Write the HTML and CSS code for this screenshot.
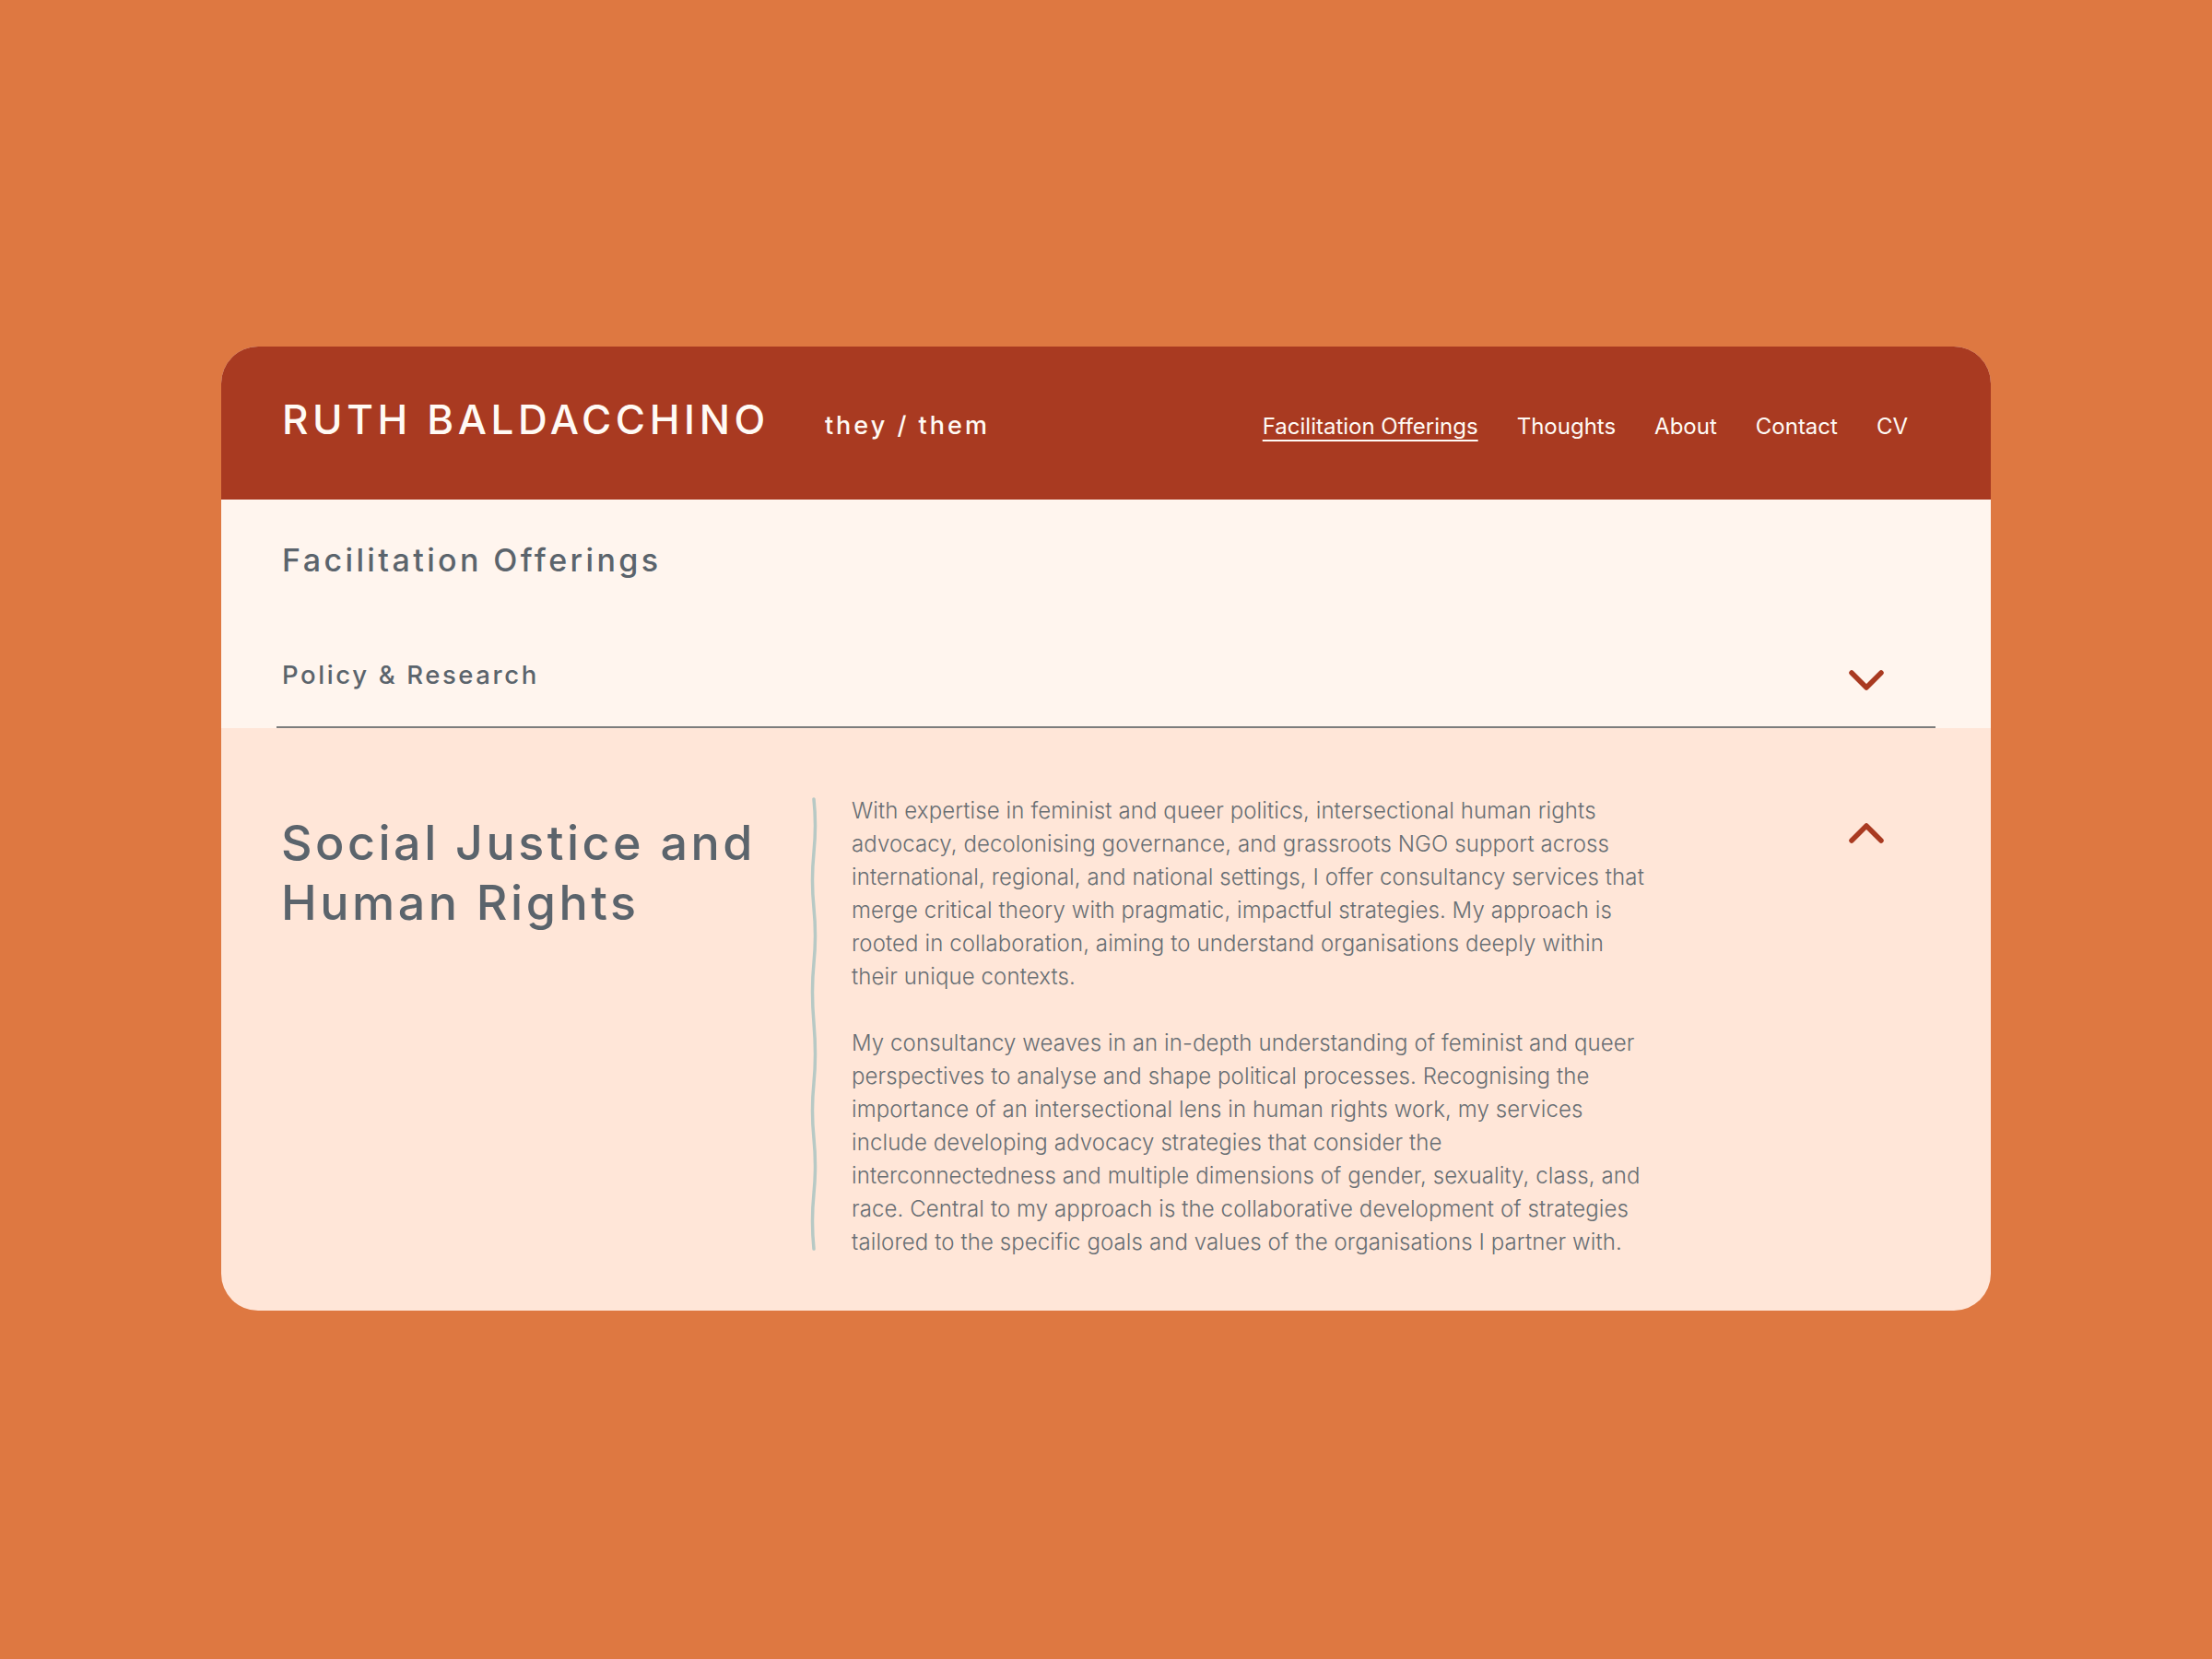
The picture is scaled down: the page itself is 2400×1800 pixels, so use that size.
FILE: index.html
```html
<!DOCTYPE html>
<html lang="en">
<head>
<meta charset="utf-8">
<title>Ruth Baldacchino — Facilitation Offerings</title>
<link rel="stylesheet" href="styles.css">
</head>
<body>
<div class="card">
  <header class="header">
    <div class="brand">RUTH BALDACCHINO</div>
    <div class="pronouns">they / them</div>
    <nav class="nav">
      <a class="nav-link active" href="#">Facilitation Offerings</a>
      <a class="nav-link" href="#">Thoughts</a>
      <a class="nav-link" href="#">About</a>
      <a class="nav-link" href="#">Contact</a>
      <a class="nav-link" href="#">CV</a>
    </nav>
  </header>
  <section class="intro">
    <h1 class="page-title">Facilitation Offerings</h1>
    <div class="acc-row">
      <h2 class="acc-title">Policy &amp; Research</h2>
      <svg class="chev chev-down" viewBox="0 0 40 26" width="40" height="26"><path d="M4 4 L20 20 L36 4" fill="none" stroke="#a93a21" stroke-width="5.5" stroke-linecap="round" stroke-linejoin="round"/></svg>
    </div>
  </section>
  <section class="panel">
    <h2 class="panel-title">Social Justice and Human Rights</h2>
    <svg class="wave" viewBox="0 0 12 492" width="12" height="492"><path d="M6 2 Q9 30 6 60 Q3 90 6 120 Q9 150 6 180 Q3 210 6 245 Q9 280 6 310 Q3 340 6 370 Q9 400 6 430 Q3 460 6 490" fill="none" stroke="#b7c9c5" stroke-width="3.5" stroke-linecap="round"/></svg>
    <div class="panel-body">
      <p>With expertise in feminist and queer politics, intersectional human rights advocacy, decolonising governance, and grassroots NGO support across international, regional, and national settings, I offer consultancy services that merge critical theory with pragmatic, impactful strategies. My approach is rooted in collaboration, aiming to understand organisations deeply within their unique contexts.</p>
      <p>My consultancy weaves in an in-depth understanding of feminist and queer perspectives to analyse and shape political processes. Recognising the importance of an intersectional lens in human rights work, my services include developing advocacy strategies that consider the interconnectedness and multiple dimensions of gender, sexuality, class, and race. Central to my approach is the collaborative development of strategies tailored to the specific goals and values of the organisations I partner with.</p>
    </div>
    <svg class="chev chev-up" viewBox="0 0 40 26" width="40" height="26"><path d="M4 22 L20 6 L36 22" fill="none" stroke="#a93a21" stroke-width="5.5" stroke-linecap="round" stroke-linejoin="round"/></svg>
  </section>
</div>
</body>
</html>
```
FILE: styles.css
```css
html, body {
  margin: 0;
  padding: 0;
}
body {
  background: #de7841;
  width: 2400px;
  height: 1800px;
  font-family: Inter, "Liberation Sans", sans-serif;
}
.card {
  width: 1920px;
  margin: 376px auto 0;
  border-radius: 40px;
  overflow: hidden;
  background: #ffe6d8;
}
.header {
  background: #a93a21;
  height: 166px;
  box-sizing: border-box;
  padding: 57px 90px 0 66px;
  display: flex;
  align-items: baseline;
  color: #fffaf5;
}
.brand {
  font-size: 44px;
  line-height: 1;
  font-weight: 500;
  letter-spacing: 4.6px;
}
.pronouns {
  margin-left: 60px;
  font-size: 27px;
  font-weight: 500;
  letter-spacing: 3px;
}
.nav {
  margin-left: auto;
  display: flex;
  gap: 42px;
}
.nav-link {
  color: #fffaf5;
  text-decoration: none;
  font-size: 24px;
  font-weight: 400;
}
.nav-link.active {
  text-decoration: underline;
  text-decoration-thickness: 2px;
  text-underline-offset: 6px;
}
.intro {
  background: #fff5ee;
  padding: 44px 60px 0;
}
.page-title {
  margin: 0 0 0 6px;
  font-size: 34px;
  line-height: 44px;
  font-weight: 500;
  letter-spacing: 3.4px;
  color: #5b646c;
}
.acc-row {
  margin-top: 84px;
  display: flex;
  align-items: flex-start;
  justify-content: space-between;
  padding: 0 55px 36px 6px;
  border-bottom: 2px solid #7c7c7c;
}
.acc-title {
  margin: 0;
  font-size: 27.5px;
  line-height: 36px;
  font-weight: 500;
  letter-spacing: 2.6px;
  color: #5b646c;
}
.chev {
  display: block;
  flex: none;
}
.chev-down {
  margin-top: 12px;
}
.panel {
  display: flex;
  align-items: flex-start;
  padding: 72px 115px 56px 65px;
}
.panel-title {
  width: 563px;
  margin: 20px 0 0;
  font-size: 52px;
  line-height: 65px;
  font-weight: 500;
  letter-spacing: 3.5px;
  color: #5b646c;
}
.wave {
  margin-top: 3px;
  margin-left: 9px;
  flex: none;
}
.panel-body {
  margin-left: 35px;
  width: 865px;
  font-size: 24px;
  line-height: 36px;
  font-weight: 300;
  letter-spacing: 0.1px;
  color: #686e73;
}
.panel-body p {
  margin: 0 0 36px;
}
.panel-body p:last-child {
  margin-bottom: 0;
}
.chev-up {
  margin-left: auto;
  margin-top: 28px;
}
```
